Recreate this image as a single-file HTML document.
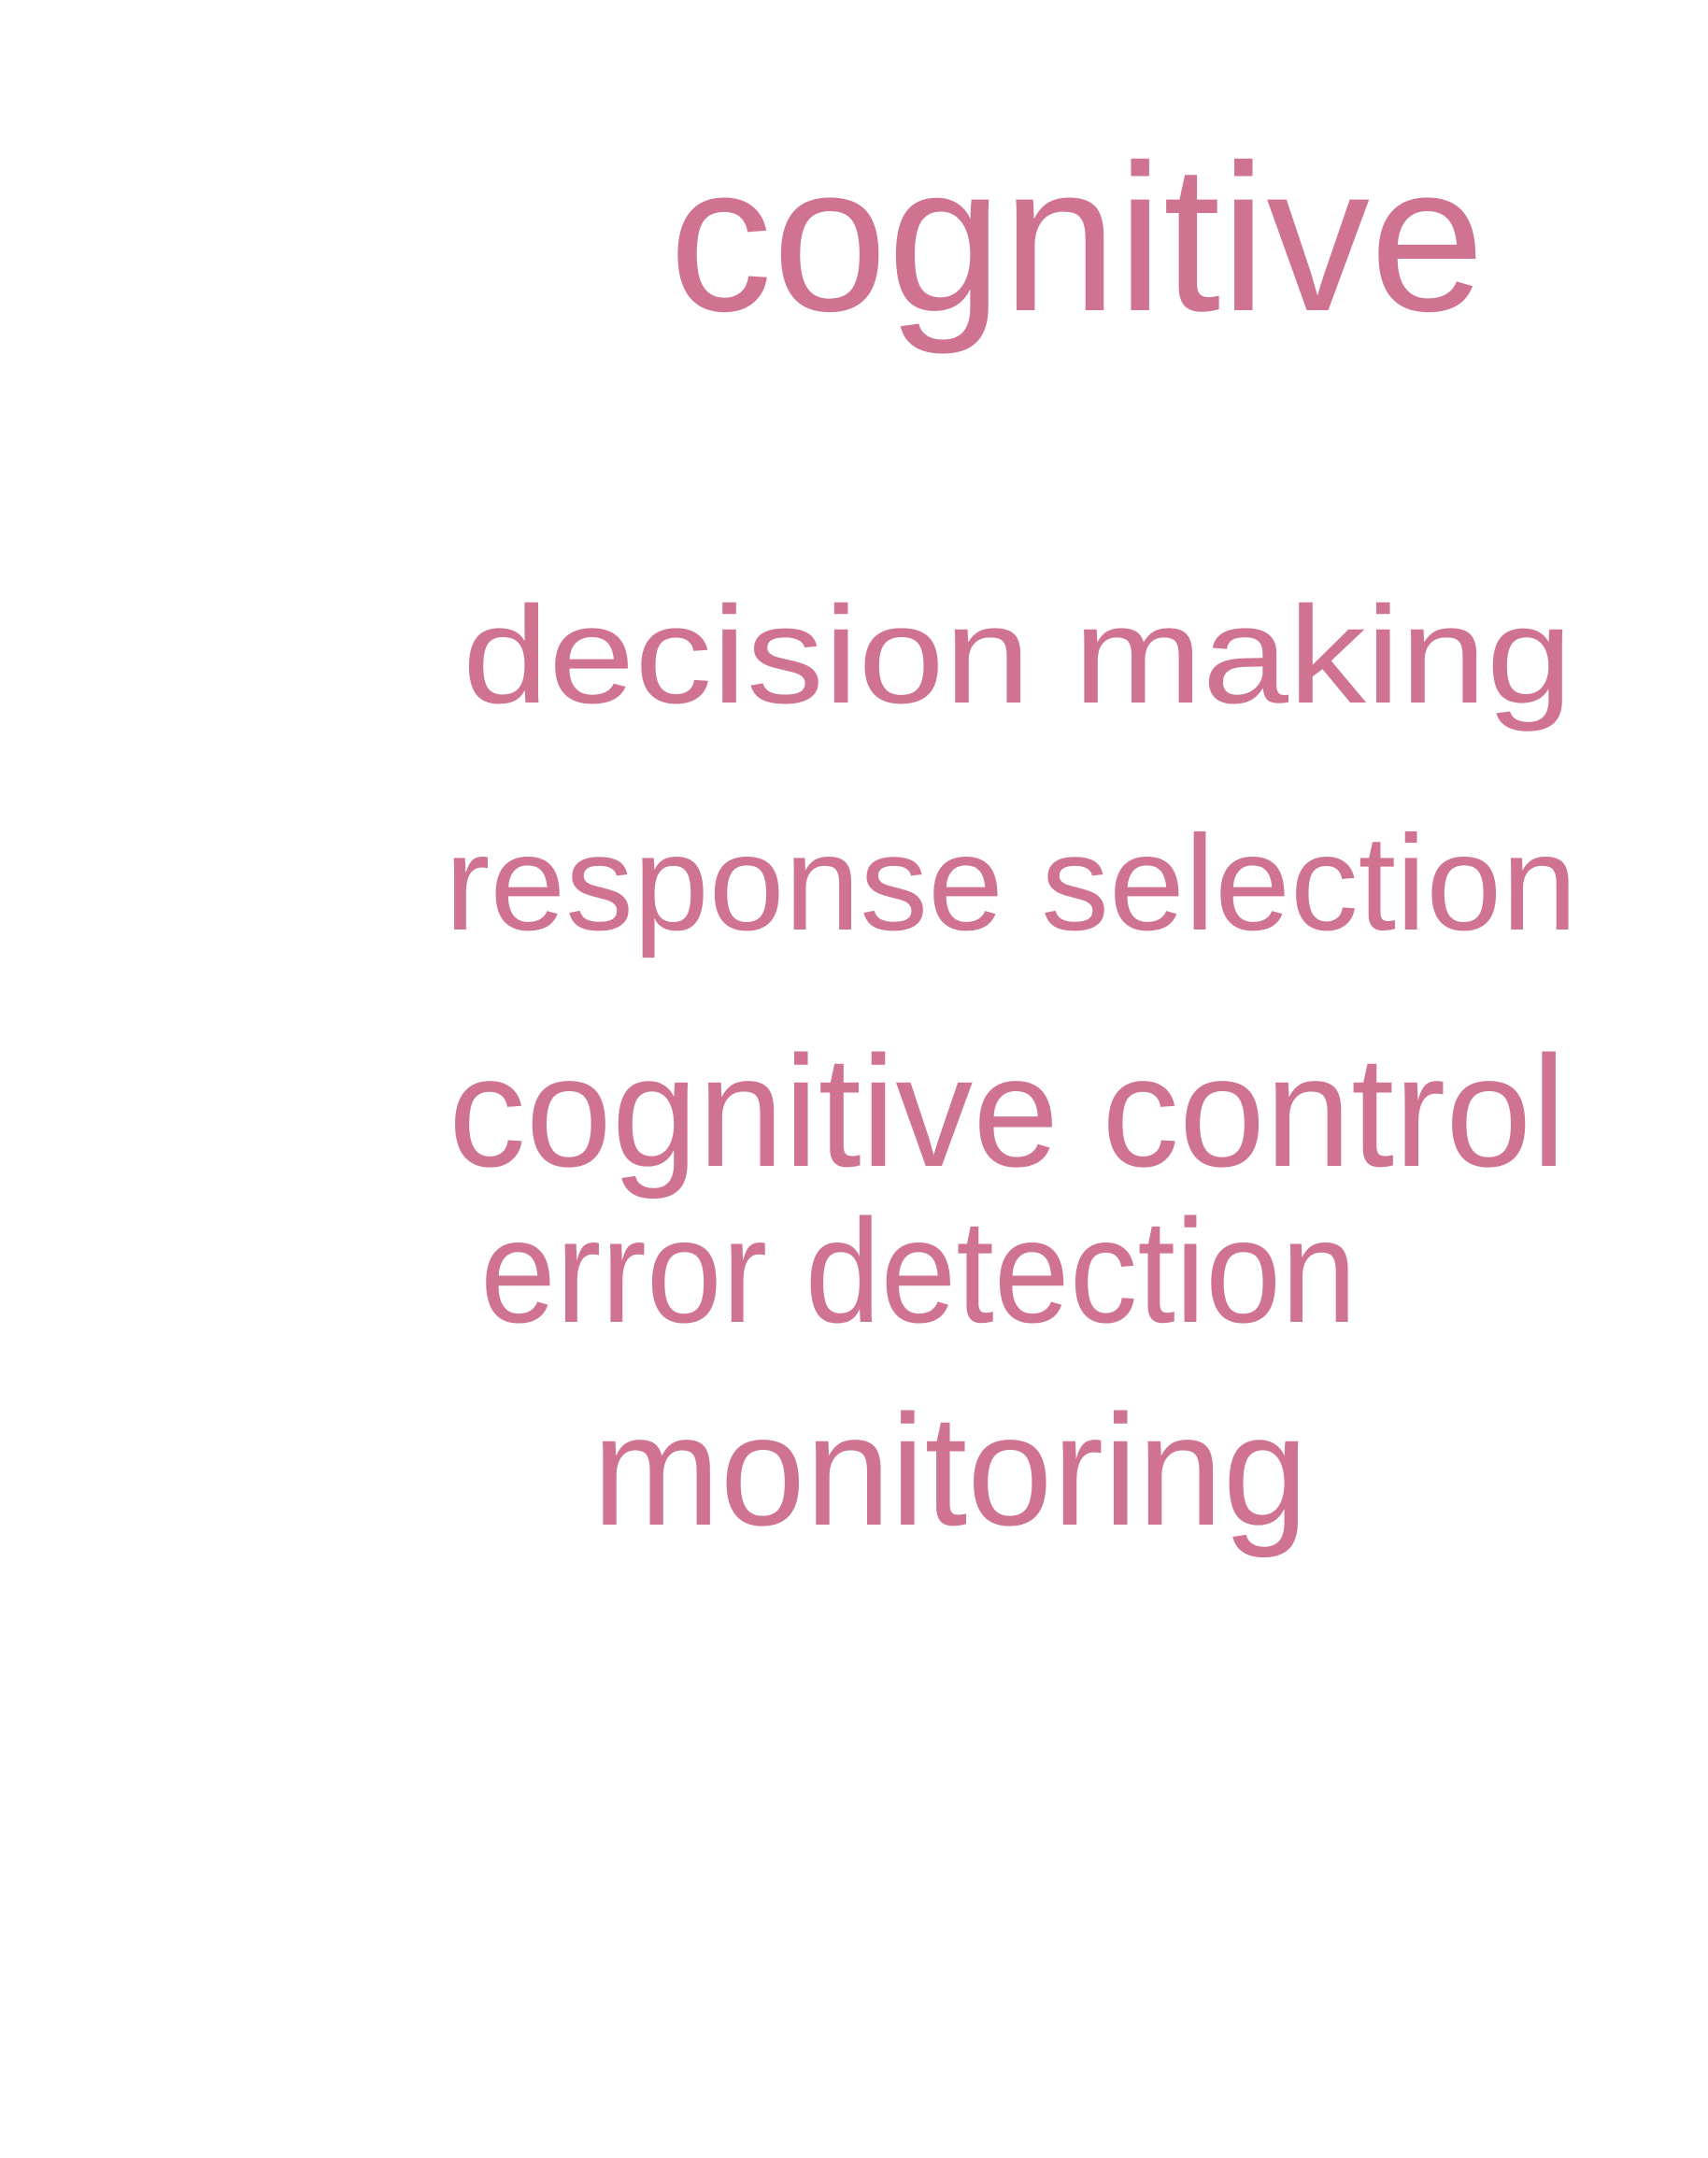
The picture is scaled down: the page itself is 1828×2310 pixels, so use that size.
<!DOCTYPE html>
<html><head><meta charset="utf-8"><style>html,body{margin:0;padding:0;background:#fff}svg{display:block}</style></head>
<body>
<svg width="1828" height="2310" viewBox="0 0 1828 2310" xmlns="http://www.w3.org/2000/svg">
<g fill="#cf7391" font-family="Liberation Sans, Arial, sans-serif">
<text x="716" y="332" font-size="224" textLength="873" lengthAdjust="spacingAndGlyphs">cognitive</text>
<text x="495" y="752" font-size="148" textLength="1188" lengthAdjust="spacingAndGlyphs">decision making</text>
<text x="476" y="995" font-size="145" textLength="1212" lengthAdjust="spacingAndGlyphs">response selection</text>
<text x="480" y="1248" font-size="169" textLength="1196" lengthAdjust="spacingAndGlyphs">cognitive control</text>
<text x="514" y="1415" font-size="158" textLength="938" lengthAdjust="spacingAndGlyphs">error detection</text>
<text x="634" y="1632" font-size="169" textLength="766" lengthAdjust="spacingAndGlyphs">monitoring</text>
</g>
</svg>
</body></html>
